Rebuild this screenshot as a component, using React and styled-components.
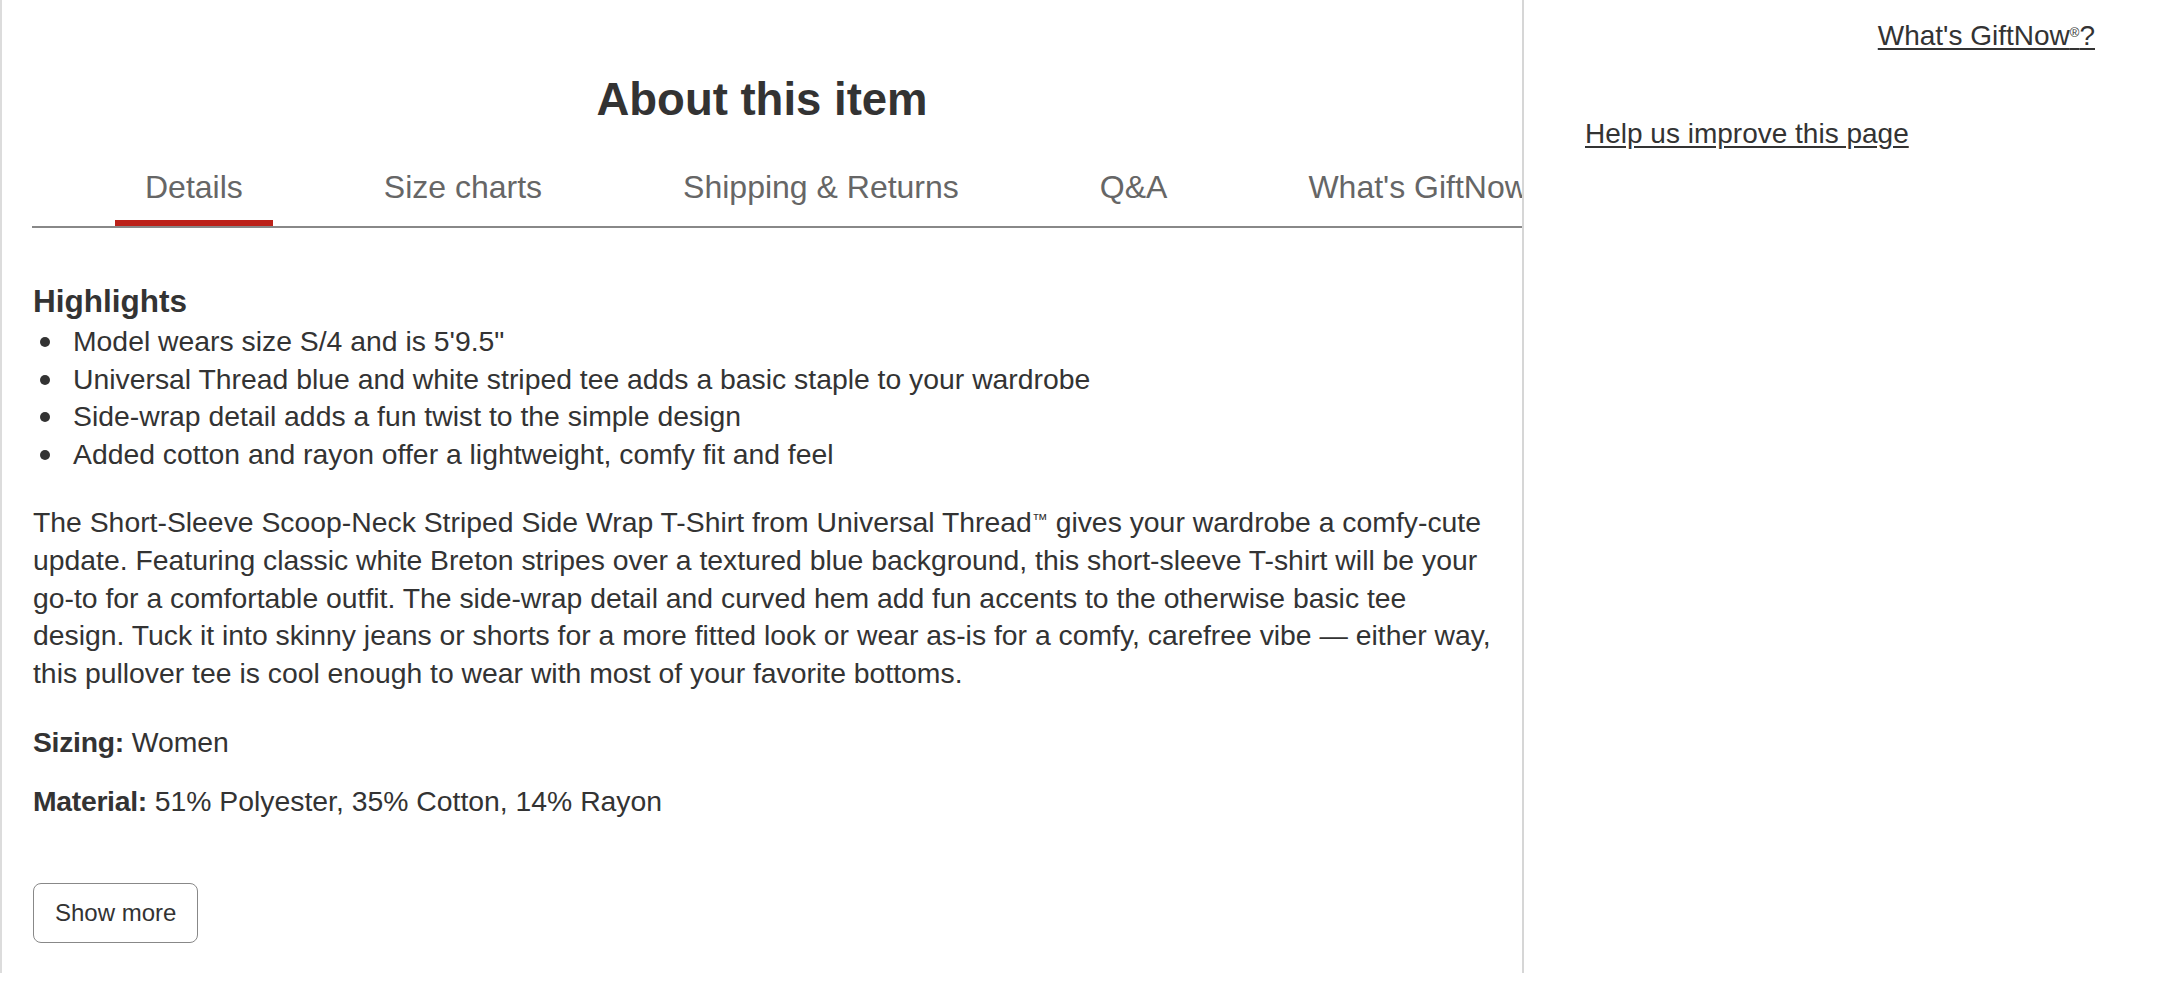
import React from "react";
import styled, { createGlobalStyle } from "styled-components";

const GlobalStyle = createGlobalStyle`
  html, body {
    margin: 0;
    padding: 0;
    background: #ffffff;
  }
  body {
    font-family: "Liberation Sans", Arial, Helvetica, sans-serif;
    color: #333333;
  }
  * { box-sizing: border-box; }
`;

const Page = styled.div`
  display: flex;
  width: 2160px;
  min-height: 988px;
  align-items: flex-start;
`;

const Main = styled.main`
  flex: none;
  width: 1524px;
  height: 973px;
  border-left: 2px solid #dcdcdc;
  border-right: 2px solid #d6d6d6;
  display: flex;
  flex-direction: column;
  overflow: hidden;
`;

const Title = styled.h2`
  margin: 0;
  padding-top: 73px;
  font-size: 45.5px;
  line-height: 54px;
  font-weight: 700;
  text-align: center;
  color: #333333;
`;

const TabBar = styled.div`
  margin: 41px 0 0 30px;
  padding-left: 83px;
  display: flex;
  gap: 81px;
  border-bottom: 2px solid #888888;
  overflow: hidden;
`;

const Tab = styled.button`
  flex: none;
  background: none;
  border: none;
  border-bottom: 6px solid ${(p) => (p.$active ? "#bb2119" : "transparent")};
  padding: 0 30px 14px;
  margin: 0;
  font-family: inherit;
  font-size: 32px;
  line-height: 38px;
  color: #666666;
  white-space: nowrap;
  cursor: pointer;
`;

const Content = styled.section`
  padding: 54px 28px 0 31px;
  font-size: 28.35px;
  line-height: 37.6px;
  color: #333333;
`;

const SubHeading = styled.h3`
  margin: 0;
  font-size: 31.5px;
  line-height: 38px;
  font-weight: 700;
`;

const List = styled.ul`
  list-style: none;
  margin: 3px 0 0;
  padding: 0;
`;

const Item = styled.li`
  display: flex;
  align-items: flex-start;
`;

const Dot = styled.span`
  flex: none;
  width: 10px;
  height: 10px;
  border-radius: 50%;
  background: #333333;
  margin: 14px 23px 0 7px;
`;

const Paragraph = styled.p`
  margin: ${(p) => p.$top}px 0 0;
`;

const Trademark = styled.span`
  font-size: 16px;
  vertical-align: 7px;
  line-height: 1;
`;

const Label = styled.b`
  font-weight: 700;
  letter-spacing: -0.3px;
`;

const ShowMore = styled.button`
  align-self: flex-start;
  margin-top: 62px;
  height: 60px;
  padding: 0 21px;
  border: 1.5px solid #888888;
  border-radius: 8px;
  background: #ffffff;
  font-family: inherit;
  font-size: 24px;
  color: #333333;
  cursor: pointer;
`;

const Side = styled.aside`
  flex: 1;
  display: flex;
  flex-direction: column;
  padding: 17px 65px 0 61px;
`;

const SideLink = styled.a`
  align-self: ${(p) => (p.$end ? "flex-end" : "flex-start")};
  margin-top: ${(p) => p.$top || 0}px;
  font-size: 28px;
  line-height: 38px;
  color: #333333;
  text-decoration: underline;
  text-underline-offset: 3px;
  cursor: pointer;
`;

const Reg = styled.sup`
  font-size: 13px;
  vertical-align: 8px;
  line-height: 1;
`;

const tabs = ["Details", "Size charts", "Shipping & Returns", "Q&A", "What's GiftNow®?"];

const highlights = [
  "Model wears size S/4 and is 5'9.5\"",
  "Universal Thread blue and white striped tee adds a basic staple to your wardrobe",
  "Side-wrap detail adds a fun twist to the simple design",
  "Added cotton and rayon offer a lightweight, comfy fit and feel",
];

export default function App() {
  return (
    <>
      <GlobalStyle />
      <Page>
        <Main>
          <Title>About this item</Title>
          <TabBar>
            {tabs.map((t, i) => (
              <Tab key={t} $active={i === 0}>
                {t}
              </Tab>
            ))}
          </TabBar>
          <Content>
            <SubHeading>Highlights</SubHeading>
            <List>
              {highlights.map((h) => (
                <Item key={h}>
                  <Dot />
                  <span>{h}</span>
                </Item>
              ))}
            </List>
            <Paragraph $top={31}>
              The Short-Sleeve Scoop-Neck Striped Side Wrap T-Shirt from Universal Thread
              <Trademark>™</Trademark> gives your wardrobe a comfy-cute update. Featuring classic white
              Breton stripes over a textured blue background, this short-sleeve T-shirt will be your
              go-to for a comfortable outfit. The side-wrap detail and curved hem add fun accents to the
              otherwise basic tee design. Tuck it into skinny jeans or shorts for a more fitted look or
              wear as-is for a comfy, carefree vibe — either way, this pullover tee is cool enough to
              wear with most of your favorite bottoms.
            </Paragraph>
            <Paragraph $top={32}>
              <Label>Sizing:</Label> Women
            </Paragraph>
            <Paragraph $top={21}>
              <Label>Material:</Label> 51% Polyester, 35% Cotton, 14% Rayon
            </Paragraph>
            <ShowMore>Show more</ShowMore>
          </Content>
        </Main>
        <Side>
          <SideLink $end>
            What's GiftNow<Reg>®</Reg>?
          </SideLink>
          <SideLink $top={60}>Help us improve this page</SideLink>
        </Side>
      </Page>
    </>
  );
}
